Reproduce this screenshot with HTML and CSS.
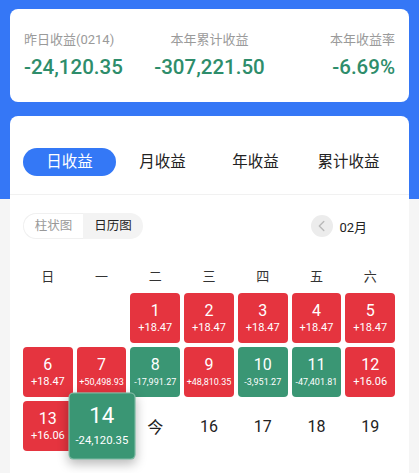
FILE: index.html
```html
<!DOCTYPE html>
<html lang="zh">
<head>
<meta charset="utf-8">
<title>收益日历</title>
<link rel="stylesheet" href="styles.css">
</head>
<body>
<div class="page">
  <section class="summary">
    <div class="stat">
      <div class="label">昨日收益(0214)</div>
      <div class="value">-24,120.35</div>
    </div>
    <div class="stat mid">
      <div class="label">本年累计收益</div>
      <div class="value">-307,221.50</div>
    </div>
    <div class="stat end">
      <div class="label">本年收益率</div>
      <div class="value">-6.69%</div>
    </div>
  </section>

  <section class="panel">
    <nav class="tabs">
      <span class="tab active">日收益</span>
      <span class="tab">月收益</span>
      <span class="tab">年收益</span>
      <span class="tab">累计收益</span>
    </nav>
    <div class="divider"></div>
    <div class="toolbar">
      <div class="seg">
        <span class="seg-item">柱状图</span>
        <span class="seg-item on">日历图</span>
      </div>
      <div class="month">
        <span class="prev"><svg width="22" height="22" viewBox="0 0 22 22"><path d="M12.8 6.5 8.3 11l4.5 4.5" fill="none" stroke="#b9b9b9" stroke-width="1.4" stroke-linecap="round" stroke-linejoin="round"/></svg></span>
        <span class="month-text">02月</span>
      </div>
    </div>

    <div class="weekdays">
      <span>日</span><span>一</span><span>二</span><span>三</span><span>四</span><span>五</span><span>六</span>
    </div>

    <div class="cal">
      <div class="day empty"></div>
      <div class="day empty"></div>
      <div class="day up"><span class="n">1</span><span class="v">+18.47</span></div>
      <div class="day up"><span class="n">2</span><span class="v">+18.47</span></div>
      <div class="day up"><span class="n">3</span><span class="v">+18.47</span></div>
      <div class="day up"><span class="n">4</span><span class="v">+18.47</span></div>
      <div class="day up"><span class="n">5</span><span class="v">+18.47</span></div>

      <div class="day up"><span class="n">6</span><span class="v">+18.47</span></div>
      <div class="day up"><span class="n">7</span><span class="v s">+50,498.93</span></div>
      <div class="day down"><span class="n">8</span><span class="v s">-17,991.27</span></div>
      <div class="day up"><span class="n">9</span><span class="v s">+48,810.35</span></div>
      <div class="day down"><span class="n">10</span><span class="v s">-3,951.27</span></div>
      <div class="day down"><span class="n">11</span><span class="v s">-47,401.81</span></div>
      <div class="day up"><span class="n">12</span><span class="v">+16.06</span></div>

      <div class="day up"><span class="n">13</span><span class="v">+16.06</span></div>
      <div class="day down selected"><span class="n">14</span><span class="v s">-24,120.35</span></div>
      <div class="day plain">今</div>
      <div class="day plain">16</div>
      <div class="day plain">17</div>
      <div class="day plain">18</div>
      <div class="day plain">19</div>
    </div>
  </section>
</div>
</body>
</html>
```

FILE: styles.css
```css
* { box-sizing: border-box; }

html, body {
  margin: 0;
  padding: 0;
  height: 100%;
}

body {
  font-family: Roboto, "Noto Sans CJK SC", sans-serif;
  background: #f5f5f5;
  color: #222;
  overflow: hidden;
}

.page {
  min-height: 100%;
  padding: 9px 10px 0;
  background: linear-gradient(#3577f6 0, #3577f6 199px, #f5f5f5 199px);
}

/* summary card */
.summary {
  background: #fff;
  border-radius: 8px;
  height: 93px;
  padding: 22px 14px 0;
  display: grid;
  grid-template-columns: 1fr 1fr 1fr;
}

.stat .label {
  font-size: 13px;
  line-height: 18px;
  color: #9a9a9a;
}

.stat .value {
  margin-top: 5px;
  font-size: 20.5px;
  line-height: 26px;
  font-weight: 500;
  color: #2e8d6b;
  white-space: nowrap;
}

.stat.mid { text-align: center; }
.stat.end { text-align: right; }

/* panel */
.panel {
  margin-top: 14px;
  background: #fff;
  border-radius: 8px 8px 0 0;
  min-height: 360px;
}

.tabs {
  display: grid;
  grid-template-columns: repeat(4, 1fr);
  padding: 32px 14px 18px 13px;
}

.tab {
  height: 28px;
  line-height: 28px;
  text-align: center;
  font-size: 15.5px;
  color: #222;
  border-radius: 14px;
}

.tab.active {
  background: #3478f6;
  color: #fff;
}

.divider {
  height: 1px;
  background: #f1f1f1;
}

.toolbar {
  margin-top: 18px;
  padding: 0 42px 0 13px;
  display: flex;
  justify-content: space-between;
  align-items: center;
  height: 26px;
}

.seg {
  display: flex;
  height: 26px;
  border-radius: 13px;
  background: #f3f3f3;
  overflow: hidden;
}

.seg-item {
  width: 60px;
  line-height: 26px;
  text-align: center;
  font-size: 12.5px;
  color: #999;
}

.seg-item:first-child {
  background: #fff;
  border: 1px solid #f0f0f0;
  border-right: none;
  border-radius: 13px 0 0 13px;
  line-height: 24px;
}

.seg-item.on {
  color: #222;
}

.month {
  display: flex;
  align-items: center;
  gap: 6px;
}

.prev {
  width: 22px;
  height: 22px;
  border-radius: 50%;
  background: #ececec;
  display: flex;
}

.month-text {
  font-size: 13px;
  color: #222;
}

/* calendar */
.weekdays,
.cal {
  display: grid;
  grid-template-columns: repeat(7, 1fr);
  column-gap: 4px;
  margin: 0 14px 0 13px;
}

.weekdays {
  margin-top: 28px;
  text-align: center;
  font-size: 13px;
  line-height: 20px;
  color: #333;
}

.cal {
  margin-top: 6px;
  row-gap: 4px;
  grid-auto-rows: 50px;
}

.day {
  border-radius: 4px;
  display: flex;
  flex-direction: column;
  align-items: center;
  justify-content: center;
  color: #fff;
}

.day.up { background: #e5343f; }
.day.down { background: #3a9674; }

.day .n {
  font-size: 16px;
  line-height: 20px;
}

.day .v {
  font-size: 11px;
  line-height: 14px;
  white-space: nowrap;
}

.day .v.s {
  font-size: 9px;
}

.day.plain {
  color: #222;
  font-size: 16px;
}

.day.selected {
  position: relative;
  z-index: 2;
  transform: scale(1.35);
  box-shadow: 0 3px 8px rgba(0, 0, 0, 0.28);
  border: 0.6px solid rgba(255, 255, 255, 0.35);
}

.day.selected .n {
  font-size: 16.5px;
}

.day.selected .v {
  font-size: 8.4px;
}
```
